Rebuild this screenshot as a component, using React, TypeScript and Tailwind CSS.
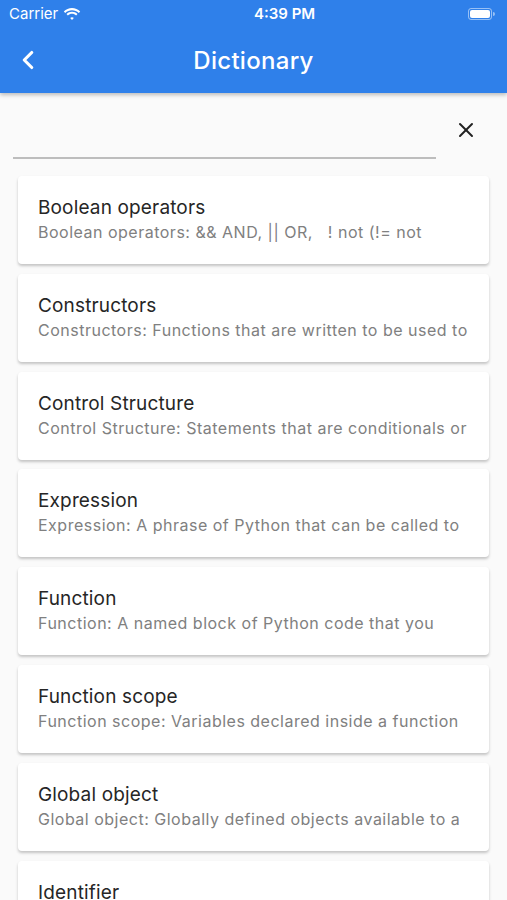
import { ChevronLeft, X } from "lucide-react";

const entries = [
  { title: "Boolean operators", desc: "Boolean operators: && AND, || OR,   ! not (!= not" },
  { title: "Constructors", desc: "Constructors: Functions that are written to be used to" },
  { title: "Control Structure", desc: "Control Structure: Statements that are conditionals or" },
  { title: "Expression", desc: "Expression: A phrase of Python that can be called to" },
  { title: "Function", desc: "Function: A named block of Python code that you" },
  { title: "Function scope", desc: "Function scope: Variables declared inside a function" },
  { title: "Global object", desc: "Global object: Globally defined objects available to a" },
  { title: "Identifier", desc: "Identifier: A name given to a variable, function or" },
];

function Wifi() {
  return (
    <svg width="18" height="13" viewBox="0 0 18 13" fill="white">
      <path d="M9 2.2c2.6 0 5 1 6.8 2.7l1.4-1.5C15 1.3 12.1 0 9 0S3 1.3.8 3.4l1.4 1.5C4 3.2 6.4 2.2 9 2.2z" />
      <path d="M9 5.8c1.6 0 3 .6 4.1 1.6l1.4-1.5C13 4.5 11.1 3.7 9 3.7S5 4.5 3.5 5.9l1.4 1.5C6 6.4 7.4 5.8 9 5.8z" />
      <path d="M9 9.3c.7 0 1.3.3 1.8.7L9 12 7.2 10c.5-.4 1.1-.7 1.8-.7z" />
    </svg>
  );
}

export default function App() {
  return (
    <div className="h-[900px] w-[507px] overflow-hidden bg-[#fafafa] font-['Inter',sans-serif]">
      <header className="relative z-10 h-[93px] bg-[#2f80ea] text-white shadow-[0_2px_4px_rgba(0,0,0,0.25)]">
        <div className="flex h-[28px] items-center justify-between px-[9px] text-[15px]">
          <div className="flex items-center gap-[5px]">
            <span>Carrier</span>
            <Wifi />
          </div>
          <span className="ml-[20px] font-semibold">4:39 PM</span>
          <div className="flex items-center pr-[3px]">
            <div className="h-[12px] w-[24px] rounded-[3px] border border-white/50 p-[1px]">
              <div className="h-full w-full rounded-[2px] bg-white" />
            </div>
            <div className="ml-[1px] h-[4px] w-[2px] rounded-r bg-white/50" />
          </div>
        </div>
        <div className="relative flex h-[65px] items-center justify-center">
          <ChevronLeft className="absolute left-[13px] top-[17px]" size={30} strokeWidth={2.5} />
          <h1 className="text-[24px] font-medium tracking-[0.3px]">Dictionary</h1>
        </div>
      </header>

      <div className="flex items-start px-[13px] pt-[22px]">
        <div className="h-[44px] flex-1 border-b-2 border-[#bdbdbd]" />
        <div className="flex w-[58px] justify-center pl-[2px]">
          <X size={24} strokeWidth={2} className="mt-[3px] text-[#212121]" />
        </div>
      </div>

      <div className="flex flex-col gap-[9.8px] px-[18px] pt-[17px]">
        {entries.map((e) => (
          <div
            key={e.title}
            className="h-[88px] shrink-0 rounded-[4px] bg-white px-[20px] pt-[20px] shadow-[0_2px_3px_rgba(0,0,0,0.22)]"
          >
            <div className="text-[19px] leading-[24px] tracking-[0.15px] text-[#262626]">{e.title}</div>
            <div className="mt-[2px] overflow-hidden whitespace-pre text-[16px] leading-[21px] tracking-[0.5px] text-[#808080]">
              {e.desc}
            </div>
          </div>
        ))}
      </div>
    </div>
  );
}
